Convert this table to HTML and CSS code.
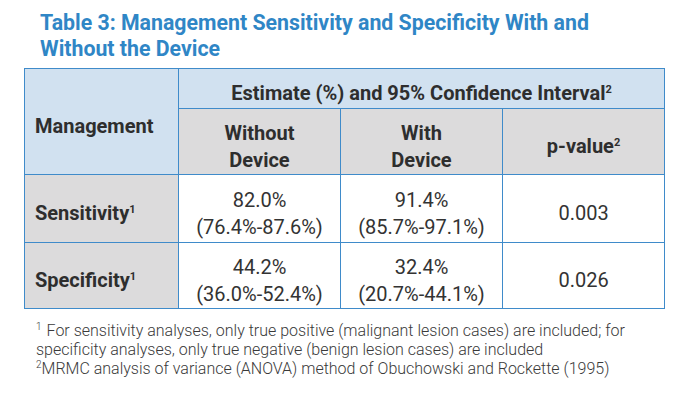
FILE: index.html
```html
<!DOCTYPE html>
<html lang="en">
<head>
<meta charset="utf-8">
<title>Table 3</title>
<link rel="stylesheet" href="styles.css">
</head>
<body>
<div class="page">
  <h1 class="title">Table 3: Management Sensitivity and Specificity With and<br>Without the Device</h1>
  <table class="results">
    <colgroup>
      <col class="c-mgmt">
      <col class="c-val">
      <col class="c-val">
      <col class="c-val">
    </colgroup>
    <thead>
      <tr class="r-h1">
        <th class="mgmt" rowspan="2">Management</th>
        <th class="blue" colspan="3">Estimate (%) and 95% Confidence Interval<sup>2</sup></th>
      </tr>
      <tr class="r-h2">
        <th class="gray">Without<br>Device</th>
        <th class="gray">With<br>Device</th>
        <th class="gray">p-value<sup>2</sup></th>
      </tr>
    </thead>
    <tbody>
      <tr class="r-d1">
        <th class="rowhead">Sensitivity<sup>1</sup></th>
        <td>82.0%<br>(76.4%-87.6%)</td>
        <td>91.4%<br>(85.7%-97.1%)</td>
        <td>0.003</td>
      </tr>
      <tr class="r-d2">
        <th class="rowhead">Specificity<sup>1</sup></th>
        <td>44.2%<br>(36.0%-52.4%)</td>
        <td>32.4%<br>(20.7%-44.1%)</td>
        <td>0.026</td>
      </tr>
    </tbody>
  </table>
  <div class="notes">
    <p><sup class="gap">1</sup>For sensitivity analyses, only true positive (malignant lesion cases) are included; for specificity analyses, only true negative (benign lesion cases) are included</p>
    <p><sup>2</sup>MRMC analysis of variance (ANOVA) method of Obuchowski and Rockette (1995)</p>
  </div>
</div>
</body>
</html>
```
FILE: styles.css
```css
html, body {
  margin: 0;
  padding: 0;
  background: #ffffff;
}

body {
  font-family: Roboto, "Liberation Sans", sans-serif;
  color: #2e2e2e;
}

.page {
  width: 682px;
  padding: 10px 0 0 24px;
  box-sizing: border-box;
}

.title {
  margin: 0 0 6px 16px;
  font-size: 21.3px;
  line-height: 26px;
  font-weight: 700;
  color: #2f86c6;
}

.results {
  width: 641px;
  border-collapse: collapse;
  table-layout: fixed;
}

.c-mgmt { width: 154px; }
.c-val { width: 162px; }

.results th,
.results td {
  border: 1px solid #3f8bca;
  padding: 10px 2px 0;
  text-align: center;
  vertical-align: middle;
  font-size: 20px;
  line-height: 26.5px;
}

.results th {
  font-weight: 700;
}

.results td {
  font-weight: 400;
  color: #333333;
}

.r-h1 { height: 40px; }
.r-h2 { height: 66px; }
.r-d1 { height: 68px; }
.r-d2 { height: 66px; }

.mgmt {
  background: #d1e1f0;
  text-align: left !important;
  padding-left: 10px !important;
}

.blue {
  background: #d1e1f0;
}

.gray {
  background: #dcdbdc;
}

.rowhead {
  background: #dcdbdc;
  text-align: left !important;
  padding-left: 10px !important;
}

.results sup {
  font-size: 11px;
  line-height: 0;
  vertical-align: 7px;
}

.notes {
  width: 612px;
  margin: 12px 0 0 12px;
  font-size: 16px;
  line-height: 19px;
  font-weight: 300;
  color: #3a3a3a;
}

.notes p {
  margin: 0;
}

.notes sup {
  font-size: 10px;
  vertical-align: super;
  line-height: 1;
}

.notes .gap {
  margin-right: 5px;
}
```
